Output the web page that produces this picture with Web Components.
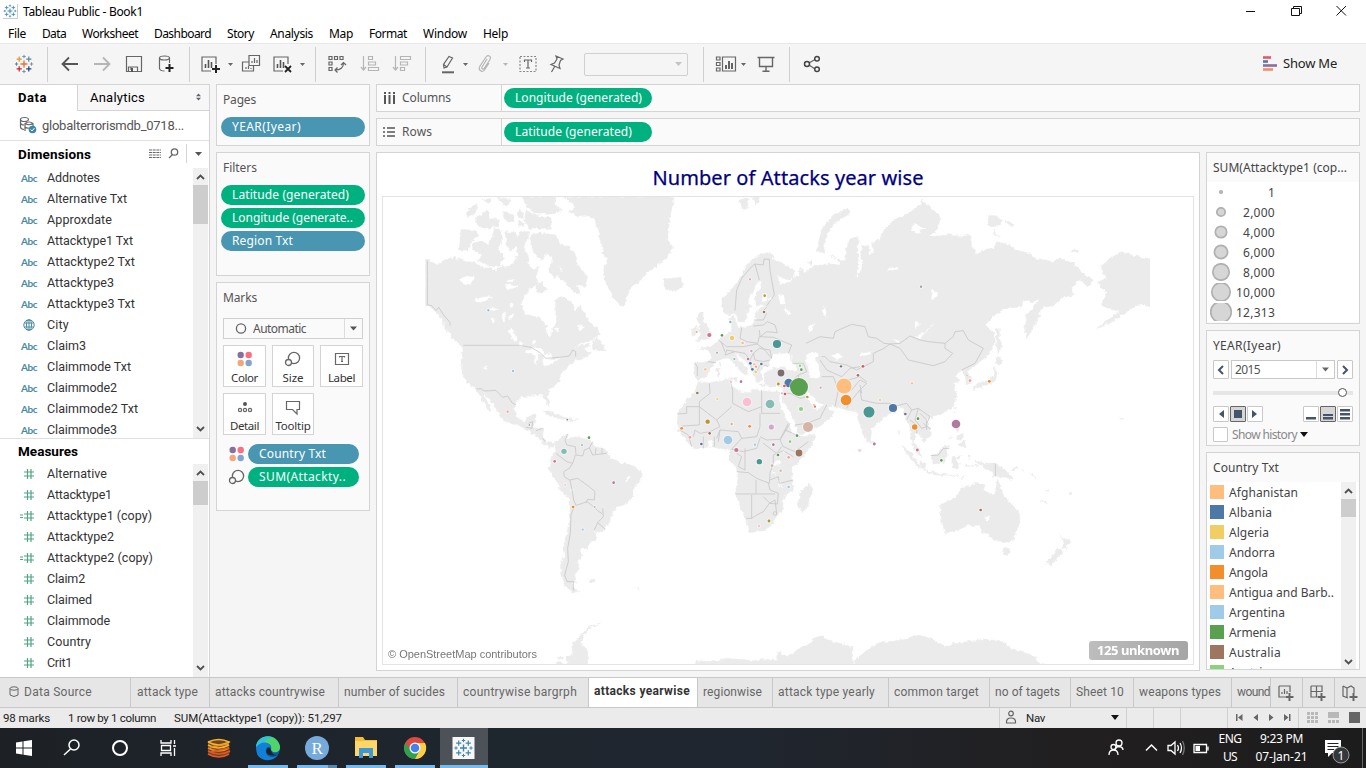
<!DOCTYPE html>
<html lang="en"><head><meta charset="utf-8"><title>Tableau Public - Book1</title>
<style>html,body{margin:0;width:1366px;height:768px;overflow:hidden;background:#f5f5f5}</style></head>
<body><tableau-app></tableau-app>
<script>
const BASE='*{box-sizing:border-box}svg{display:block;overflow:visible;flex:none}';
function define(name,css,html){
  customElements.define(name,class extends HTMLElement{
    connectedCallback(){
      if(this.shadowRoot)return;
      const r=this.attachShadow({mode:'open'});
      r.innerHTML='<style>'+BASE+css+'</style>'+(typeof html==='function'?html(this):html);
    }
  });
}
const T=(t,w)=>`<fit-text w="${w}">${t}</fit-text>`;
const plus=(x,y,r,c,w=1)=>`<path d="M${x-r} ${y}H${x+r}M${x} ${y-r}V${y+r}" stroke="${c}" stroke-width="${w}"/>`;
const logo=(cols)=>plus(10,10,3.5,cols[0],1.4)+plus(5.2,5.2,2.6,cols[1],1.2)+plus(14.8,5.2,2.6,cols[2],1.2)+plus(5.2,14.8,2.6,cols[3],1.2)+plus(14.8,14.8,2.6,cols[4],1.2)+plus(10,2.5,1.7,cols[5])+plus(10,17.5,1.7,cols[6])+plus(2.5,10,1.7,cols[7])+plus(17.5,10,1.7,cols[8]);
const blue=Array(9).fill('#3f86ad');
const D='fill="none" stroke="#666" stroke-width="1.2"', L='fill="none" stroke="#b5b5b5" stroke-width="1.2"';
const size='<circle cx="11" cy="9" r="5.6"/><circle cx="5.5" cy="13.5" r="3" fill="#fafafa"/>';
const dots='<g stroke="none"><circle cx="5.7" cy="6" r="3.2" fill="#86719d"/><circle cx="13.7" cy="6" r="3.2" fill="#fb6e82"/><circle cx="5.7" cy="14" r="3.2" fill="#f3a678"/><circle cx="13.7" cy="14" r="3.2" fill="#83a4cd"/></g>';
const I={
 logo:logo(['#e8762c','#e8912d','#5b879b','#c72037','#1f457d','#5b9bc0','#7199a6','#59879b','#7199a6']),
 blogo:logo(blue),
 back:`<path d="M18 10H3M9 3.500L2.500 10L9 16.500" fill="none" stroke="#555" stroke-width="1.800"/>`,
 fwd:`<path d="M2 10H17M11 3.500L17.500 10L11 16.500" fill="none" stroke="#b5b5b5" stroke-width="1.800"/>`,
 save:`<path d="M2.500 2.500H17.500V17.500H2.500ZM4.500 17V13H13.500V17M7 13V16" ${D}/><path d="M7 14h2v4H7z" fill="#555"/>`,
 db:`<path d="M13.500 9V4M3.500 4V14.500Q4 17 8.500 17" ${D}/><ellipse cx="8.500" cy="4" rx="5" ry="2" ${D}/><path d="M13.500 10V18M9.500 14H17.500" stroke="#222" stroke-width="2"/>`,
 sheet:`<path d="M11 17H2V3H16V10" ${D}/><path d="M5.500 14V10M8.500 14V6M11.500 14V8" stroke="#555" stroke-width="1.600"/><path d="M16 11V19M12 15H20" stroke="#222" stroke-width="2"/>`,
 dup:`<path d="M8 1.500H18.500V11.500H8ZM8 8H1.500V17H12.500V12M11 9V7M13.500 9V4M16 9V6M5 15V13M7.500 15V12M10 15V14" ${D}/>`,
 clear:`<path d="M11 17H2V3H16V10" ${D}/><path d="M5.500 14V10M8.500 14V6M11.500 14V8" stroke="#555" stroke-width="1.600"/><path d="M13 12L19 18M19 12L13 18" stroke="#222" stroke-width="1.800"/>`,
 swap:`<path d="M2 2.500h3v3H2zM7.500 2.500h3v3H7.500zM13 2.500h3v3H13zM2 8h3v3H2zM2 13.500h3v3H2zM8 16Q16.500 16 16.500 9M14 11L16.500 8.500L19 11M10.500 13.500L8 16L10.500 18.500" ${D}/>`,
 asc:`<path d="M3.500 2V16M1 13L3.500 16L6 13M8.500 2.500H12.500V5.500H8.500ZM8.500 8H15.500V11H8.500ZM8.500 13.500H18.500V16.500H8.500Z" ${L}/>`,
 desc:`<path d="M3.500 2V16M1 13L3.500 16L6 13M8.500 2.500H18.500V5.500H8.500ZM8.500 8H15.500V11H8.500ZM8.500 13.500H12.500V16.500H8.500Z" ${L}/>`,
 pen:`<path d="M6 14L5.500 10.500L11 2.500L14.500 4L9 13ZM5.500 10.500L9 13" ${D}/><path d="M4 18.300H16" stroke="#666" stroke-width="2"/>`,
 clip:`<path d="M12 5L7 13C6 15 8.500 16 9.500 14L15 5.500C17 2 12.500 .5 11 3L5 12C2.500 16.500 7.500 19 9.500 16L14 9" ${L}/>`,
 text:`<path d="M2 2.500H18V17.500H2Z" fill="none" stroke="#888" stroke-width="1.200" stroke-dasharray="2 1.500"/><path d="M6.500 8V6H13.500V8M10 6V14M8 14H12" ${D}/>`,
 pin:`<path d="M9 2L16 5L13.500 6.500L12 11L13 14.500L4 10.500L7.500 9L10 5Z M8 12L4.500 18" ${D}/>`,
 fit:`<path d="M.5 3h3.500v3H.5zM.5 8.500h3.500v3H.5zM.5 14h3.500v3H.5zM6.500 3H19.500V17H6.500Z" ${D}/><path d="M10 15V11M13 15V7M16 15V9" stroke="#555" stroke-width="1.800"/>`,
 pres:`<path d="M1.500 3.500H18.500M3.500 3.500V12.500H16.500V3.500M10 12.500V17M6.500 17.300H13.500" fill="none" stroke="#666" stroke-width="1.400"/>`,
 share:`<path d="M7 9L13 5.500M7 11L13 15" ${D}/><g fill="none" stroke="#444" stroke-width="1.500"><circle cx="5" cy="10" r="2.500"/><circle cx="15" cy="4.700" r="2.300"/><circle cx="15" cy="15.300" r="2.300"/></g>`,
 showme:`<path d="M3 3.500H11" stroke="#e9546b" stroke-width="2.600"/><path d="M3 7.500H8" stroke="#4e79a7" stroke-width="2.600"/><path d="M3 11.500H17" stroke="#8e6c9b" stroke-width="2.600"/><path d="M3 15.500H13" stroke="#f28e6b" stroke-width="2.600"/>`,
 car:`<path d="M7.500 9H12.500L10 12Z" fill="#666"/>`, carl:`<path d="M7.500 9H12.500L10 12Z" fill="#b8b8b8"/>`,
 size:`<g fill="none" stroke="#666" stroke-width="1.300">${size}</g>`, dots,
 label:`<path d="M3.500 4.500H16.500V15.500H3.500Z M7.500 8.500V7.500H12.500V8.500M10 7.500V12.500M9 12.500H11" ${D}/>`,
 detail:`<circle cx="10" cy="7" r="2" fill="#555"/><g ${D}><circle cx="5" cy="13" r="1.600"/><circle cx="10" cy="13" r="1.600"/><circle cx="15" cy="13" r="1.600"/></g>`,
 tip:`<path d="M3.500 4.500H16.500V12.500H14V17L9.500 12.500H3.500Z" ${D}/>`,
 globe:`<g fill="none" stroke="#4a8aa3" stroke-width="1"><circle cx="10" cy="10" r="5.200"/><ellipse cx="10" cy="10" rx="2.500" ry="5.200"/><path d="M5.500 8H14.500M5.500 12H14.500M10 5V15"/></g>`,
 hash:`<path d="M8.500 5V15M12 5V15M5 8H15M5 12H15" stroke="#4fa484" stroke-width="1.200"/>`,
 ehash:`<path d="M8.500 5V15M12 5V15M5 8H15M5 12H15M1 9H4M1 11.500H4" stroke="#4fa484" stroke-width="1.200"/>`,
 src:`<g ${D}><ellipse cx="6.500" cy="4.500" rx="4" ry="2"/><path d="M2.500 4.500V12Q2.500 14 6 14.500M2.500 8Q3 10 6 10"/><path d="M7 16V8.500Q11 5.500 15 8.500V11M7 8.500Q11 11 15 8.500M7 12Q9 13.500 11 13"/></g><circle cx="14.500" cy="14.500" r="3.800" fill="#3e87a8"/><path d="M12.600 14.500L14 16L16.500 13" fill="none" stroke="#fff"/>`
};
const svg=(n,w=20)=>`<svg width="${w}" height="${w}" viewBox="0 0 20 20">${I[n]}</svg>`;

/* Text run tracked to a fixed measure. */
customElements.define('fit-text',class extends HTMLElement{
  connectedCallback(){
    if(this.shadowRoot)return;
    const r=this.attachShadow({mode:'open'}),w=+this.getAttribute('w');
    r.innerHTML=`<style>:host{display:inline-block;width:${w}px;white-space:pre;flex:none;vertical-align:top}span{display:inline-block}</style><span><slot></slot></span>`;
    const s=r.querySelector('span');
    s.style.letterSpacing=((w-s.getBoundingClientRect().width)/this.textContent.length)+'px';
  }
});
define('title-bar',`:host{display:flex;height:22px;background:#fff;align-items:center;font:12px "Noto Sans",sans-serif;color:#000;padding-left:3px}
.i{width:15px;height:15px;border:1px solid #ccc;border-width:0 1px 1px 0;margin-right:5px}.w{margin-left:auto;padding-right:16px}`,
`<div class="i">${svg('blogo',14)}</div>${T('Tableau Public - Book1',120)}<svg class="w" width="124" height="22" fill="none" stroke="#111"><path d="M4 11.500H13M49.500 8.500H57.500V15.500H49.500ZM51.500 8V6.500H59.500V13.500H58M94.500 6L104 15.500M104 6L94.500 15.500"/></svg>`);
define('menu-bar',`:host{display:flex;height:21px;background:#fff;align-items:center;font:12px "Noto Sans",sans-serif;color:#000;padding:1px 0 0 8px;gap:16px}`,
 [['File',18],['Data',24],['Worksheet',56],['Dashboard',57],['Story',27],['Analysis',43],['Map',24],['Format',38],['Window',44],['Help',25]].map(a=>T(...a)).join(''));
const tools=[['logo',23.5],['|',47],['back',70],['fwd',102],['save',134],['db',166],['|',189],['sheet',210],['car',230],['dup',251],['clear',282],['car',302.5],['|',315],['swap',337],['asc',370],['desc',402],['|',425],['pen',448],['car',465.5],['clip',485],['carl',505.5],['text',527.5],['pin',557],['box',635.5],['|',703],['fit',726],['car',743.5],['pres',765.500],['|',789],['share',812],['showme',1270]];
define('tool-bar',`:host{display:flex;height:41px;background:#f5f5f5;border-top:1px solid #e8e8e8;align-items:center;font:13px "Noto Sans",sans-serif;color:#222}
i{width:1px;height:35px;background:#cfcfcf}.b{width:104px;height:23px;border:1px solid #d0d0d0;border-radius:2px;display:flex;justify-content:flex-end;align-items:center}`,
()=>{let x=0,o='';for(const[n,c]of tools){const w=n=='|'?1:n=='box'?104:n.startsWith('car')?7:20,l=c-w/2,m=`style="margin-left:${l-x}px"`;x=l+w;
 o+=n=='|'?`<i ${m}></i>`:n=='box'?`<div class="b" ${m}><svg width="16" height="20"><path d="M4 8H11L7.500 12Z" fill="#c4c4c4"/></svg></div>`:w==7?`<svg ${m} width="7" height="20" viewBox="6.500 0 7 20">${I[n]}</svg>`:`<svg ${m} width="20" height="20">${I[n]}</svg>`}
 return o+'<span style="margin-left:3px;margin-top:-2px">'+T('Show Me',54)+'</span>'});

define('scroll-bar',`:host{display:flex;flex-direction:column;width:15px;background:#f0f0f0;align-items:center;justify-content:space-between;padding:6px 0;position:relative}
i{position:absolute;top:17px;left:0;width:15px;background:#cdcdcd}`,
 e=>`<svg width="9" height="6"><path d="M1 5L4.500 1.500L8 5" fill="none" stroke="#505050" stroke-width="1.800"/></svg><i style="height:${e.getAttribute('thumb')}px"></i><svg width="9" height="6"><path d="M1 1L4.500 4.500L8 1" fill="none" stroke="#505050" stroke-width="1.800"/></svg>`);
define('field-row',`:host{display:flex;height:21px;flex:none;align-items:center;font:12.500px Roboto,sans-serif;color:#333}
b{width:28px;margin-left:19px;display:flex;flex:none;font:700 10px Lato,sans-serif;color:#4a8aa3}b span{padding:1px 0 0 2px}`,
 e=>{const k=e.getAttribute('kind');return `<b>${k=='abc'?'<span>'+T('Abc',16)+'</span>':svg(k)}</b><fit-text w="${e.getAttribute('w')}">${e.getAttribute('label')}</fit-text>`});
const rows=a=>a.map(([k,t,w])=>`<field-row kind="${k}" label="${t}" w="${w}"></field-row>`).join('');
define('data-pane',`:host{display:flex;flex-direction:column;width:210px;flex:none;height:593px;background:#fff;border-right:1px solid #d4d4d4;overflow:hidden;color:#000;font:13px Roboto,sans-serif}
.tabs{display:flex;height:27px;border-top:1px solid #d4d4d4;flex:none;line-height:25px}.tabs b{width:77px;padding-left:18px}
.an{flex:1;background:#f7f7f7;border-left:1px solid #d4d4d4;border-bottom:1px solid #d4d4d4;padding:0 7px 0 12px;display:flex;justify-content:space-between;align-items:center;font-size:13px}
.src{display:flex;height:30px;flex:none;align-items:center;border-bottom:1px solid #e0e0e0;padding:0 0 1px 18px;gap:4px;color:#555;font-size:13px}
.h{display:flex;flex:none;padding:0 0 2px 18px;align-items:center;font-weight:700;font-size:13.500px}
.l{display:flex;overflow:hidden;justify-content:space-between;padding-right:1px}`,
`<div class="tabs"><b>${T('Data',29)}</b><div class="an">${T('Analytics',55)}<svg width="7" height="8" style="margin-top:-2px"><path d="M1 3.300L3.500 .5L6 3.300ZM1 4.700L3.500 7.500L6 4.700Z" fill="#5c6370"/></svg></div></div>
<div class="src">${svg('src')}${T('globalterrorismdb_0718...',142)}</div>
<div class="h" style="height:27px">${T('Dimensions',73)}<svg style="margin-left:58px" width="60" height="20"><path d="M0 6H12M0 8.500H12M0 11H12M0 13.500H12" stroke="#666" stroke-dasharray="3 .7"/><g fill="none" stroke="#666" stroke-width="1.300"><circle cx="25.500" cy="8" r="3.200"/><path d="M23.500 10.500L20 14"/></g><path d="M37.500 0V19" stroke="#d4d4d4"/><path d="M46 8H53L49.500 12Z" fill="#555"/></svg></div>
<div class="l" style="height:271px;flex:none;border-bottom:1px solid #e0e0e0"><div style="margin-top:-1px">${rows([['abc','Addnotes',53],['abc','Alternative Txt',80],['abc','Approxdate',65],['abc','Attacktype1 Txt',86],['abc','Attacktype2 Txt',88],['abc','Attacktype3',67],['abc','Attacktype3 Txt',88],['globe','City',22],['abc','Claim3',39],['abc','Claimmode Txt',84],['abc','Claimmode2',70],['abc','Claimmode2 Txt',91],['abc','Claimmode3',70]])}</div><scroll-bar thumb="39"></scroll-bar></div>
<div class="h" style="height:25px">${T('Measures',60)}</div>
<div class="l" style="flex:1"><div style="margin-top:-1px">${rows([['hash','Alternative',60],['hash','Attacktype1',65],['ehash','Attacktype1 (copy)',105],['hash','Attacktype2',67],['ehash','Attacktype2 (copy)',106],['hash','Claim2',38],['hash','Claimed',45],['hash','Claimmode',63],['hash','Country',44],['hash','Crit1',25]])}</div><scroll-bar thumb="24"></scroll-bar></div>`);

define('ui-card',`:host{display:block;background:#fafafa;border:1px solid #d4d4d4;font:12px "Noto Sans",sans-serif;color:#555;overflow:hidden;flex:none}`,'<slot></slot>');
define('field-pill',`:host{display:flex;height:20px;border-radius:10px;align-items:center;padding:0 0 1px 11px;color:#fff;background:#00b180;font:12px/18px "Noto Sans",sans-serif}:host([dim]){background:#4996b2}`,e=>`<fit-text w="${e.getAttribute('w')}">${e.getAttribute('label')}</fit-text>`);
const pill=(t,w,dim,st='')=>`<field-pill label="${t}" w="${w}" ${dim?'dim':''} style="${st}"></field-pill>`;
define('mark-button',`:host{display:flex;flex-direction:column;align-items:center;justify-content:space-between;height:42px;background:#fff;border:1px solid #d4d4d4;padding:3px 0 1px;font:11.500px/15px "Noto Sans",sans-serif;color:#333}`,e=>svg(e.getAttribute('icon'))+`<fit-text w="${e.getAttribute('w')}">${e.getAttribute('label')}</fit-text>`);
define('card-column',`:host{display:flex;flex-direction:column;gap:6px;width:154px;margin-left:6px;flex:none}
.t{padding:6px 0 0 6px;height:30px;color:#555}.p{display:flex;flex-direction:column;gap:3px;padding:0 4px}
.sel{margin:5px 6px 0;height:21px;border:1px solid #d0d0d0;background:#fafafa;display:flex;align-items:center;width:140px}
.g{display:grid;grid-template-columns:43px 42px 43px;gap:6px;margin:6px 6px 0}.g mark-button{height:42px}
.r{display:flex;padding-left:10px;margin-bottom:3px;gap:1px;align-items:center}.r field-pill{width:111px}`,
`<ui-card style="height:62px"><div class="t" style="height:32px">${T('Pages',33)}</div><div class="p">${pill('YEAR(Iyear)',69,1)}</div></ui-card>
<ui-card style="height:124px"><div class="t" style="height:32px">${T('Filters',34)}</div><div class="p">${pill('Latitude (generated)',117)+pill('Longitude (generate..',121)+pill('Region Txt',61,1)}</div></ui-card>
<ui-card style="height:229px"><div class="t">${T('Marks',34)}</div><div class="sel"><svg width="29" height="19"><circle cx="17" cy="9.500" r="4.600" fill="none" stroke="#666" stroke-width="1.300"/></svg>${T('Automatic',53)}<svg style="margin-left:auto" width="18" height="19"><path d="M.5 0V19" stroke="#ddd"/><path d="M6 7.500H13L9.500 11.500Z" fill="#555"/></svg></div>
<div class="g">${[['dots','Color',27],['size','Size',21],['label','Label',27],['detail','Detail',29],['tip','Tooltip',35]].map(a=>`<mark-button icon="${a[0]}" label="${a[1]}" w="${a[2]}"></mark-button>`).join('')}</div>
<div style="height:9px"></div><div class="r">${svg('dots')}${pill('Country Txt',67,1)}</div><div class="r">${svg('size')}${pill('SUM(Attackty..',87)}</div></ui-card>`);
define('shelf-row',`:host{display:flex;height:28px;border:1px solid #d4d4d4;background:#fafafa;align-items:center;font:12px "Noto Sans",sans-serif;color:#555}
.n{width:125px;height:100%;border-right:1px solid #d4d4d4;display:flex;align-items:center;gap:6px;padding:0 0 1px 6px;margin-right:2px}field-pill{width:148px}`,
e=>{const c=e.hasAttribute('cols');return `<div class="n"><svg width="13" height="12"><path d="${c?'M2 0V2M6.500 0V2M11 0V2M2 3V12M6.500 3V12M11 3V12':'M0 2H2M0 6H2M0 10H2M4 2H12M4 6H12M4 10H12'}" stroke="#555" stroke-width="${c?2:1.6}"/></svg>${c?T('Columns',49):T('Rows',30)}</div>${c?pill('Longitude (generated)',127):pill('Latitude (generated)',117)}`});

/* Map: each group is drawn on a sheet three times finer than the page. */
const G=(x,y,s,a='')=>`<g transform="translate(${x} ${y}) scale(.33333)" ${a}>${s}</g>`;
const P=d=>`<path d="${d}"/>`;
const land=G(376,190,P('M148 207L160 212L185 225L205 210L225 208L237 198L240 212L255 205L270 215L300 218L325 235L345 232L355 240L380 228L400 232L415 215L425 190L420 150L432 125L458 125L460 135L445 160L450 190L460 200L455 225L475 240L490 225L480 255L485 280L460 300L440 325L435 350L450 372L490 385L510 405L515 435L525 440L530 415L540 400L543 385L538 355L540 330L545 318L565 325L590 340L600 365L612 348L625 370L640 395L665 415L670 435L650 450L610 462L590 478L612 466L640 460L645 465L625 475L630 485L650 490L610 510L600 505L590 520L570 535L555 550L548 575L530 590L515 605L515 620L522 640L518 648L508 628L500 615L480 615L440 620L420 635L415 655L425 685L445 695L460 675L480 675L475 700L470 713L503 715L500 735L510 755L535 762L530 772L505 765L485 740L460 725L440 712L400 700L375 685L360 655L335 620L320 605L345 660L340 664L320 630L300 598L275 580L258 550L255 510L262 475L235 450L220 430L205 400L190 380L180 365L160 348L148 348Z')+
P('M565 20L895 20L880 90L875 150L890 170L870 205L850 220L835 235L810 250L790 275L765 290L750 325L745 350L720 335L700 300L685 265L683 235L695 210L680 190L685 180L672 150L668 120L655 85L630 75L600 78L580 65L600 50Z')+
P('M255 118L300 122L310 135L290 150L275 180L250 180ZM290 160L320 150L335 165L350 140L355 115L375 120L380 150L365 175L385 205L370 228L330 225L305 210L318 195L290 180ZM390 125L420 128L425 165L405 180L390 165ZM465 135L490 128L500 160L510 190L500 210L475 190L465 165ZM490 130L540 135L550 160L580 170L600 200L605 225L635 260L625 290L600 280L615 310L600 310L560 270L545 262L560 240L530 205L500 180ZM530 205L545 210L555 250L535 265L520 240ZM480 285L495 275L515 300L495 308L480 305ZM450 60L475 75L525 85L525 115L460 115L445 90ZM440 20L540 20L535 45L560 60L530 72L480 72L450 50ZM275 60L305 40L300 65L275 82ZM298 85L335 60L340 85L370 90L365 110L320 115L300 100ZM380 65L415 75L410 95L385 90ZM320 30L345 25L340 40ZM365 25L405 30L390 48ZM425 60L443 70L440 85L425 80ZM430 90L445 100L440 112L425 108ZM650 455L665 442L690 482L650 480ZM200 400L215 405L212 430ZM497 665L520 662L560 680L590 690L540 685ZM580 686L605 690L570 695ZM862 270L870 262V285Z'))+
G(376,420,P('M535 70L555 52L575 40L570 58L600 50L640 60L660 80L690 88L705 115L740 130L770 135L795 155L795 175L775 200L770 230L755 250L725 260L710 280L700 305L680 335L655 335L665 355L640 370L635 385L612 388L620 405L605 425L610 440L595 465L600 485L590 490L595 510L612 515L590 517L565 495L560 470L553 440L565 410L562 380L575 330L582 280L582 235L555 210L535 175L518 150L525 115L540 95ZM640 478H656V486H642ZM780 503L790 512L782 508ZM675 608L640 625L620 650L612 668L635 690L635 735H575L570 712L590 705L588 680L610 650L640 620ZM548 712H560V718H548ZM545 728H560V735H545Z'))+
G(660,190,P('M185 325L215 300L235 270L260 225L285 200L320 188L340 195L335 208L360 215L400 240L403 260L385 270L365 262L350 255L360 285L390 275L410 258L418 262L418 240L425 232L432 250L465 228L500 222L545 225L525 205L512 195L530 205L555 215L560 200L555 180L570 145L590 140L590 170L595 200L600 230L590 265L605 240L605 170L630 170L625 195L640 190L635 160L660 150L665 130L700 90L740 75L780 45L785 30L820 60L840 80L835 115L805 140L870 135L900 140L930 135L935 170L950 190L1000 175L1010 155L1050 165L1065 180L1110 190L1125 205L1180 215L1200 205L1240 220L1280 260L1300 270L1285 290L1260 270L1235 290L1240 315L1215 320L1180 345L1140 355L1140 375L1120 415L1100 445L1092 410L1100 375L1140 325L1120 335L1090 330L1085 350L1040 355L1010 370L975 405L1000 425L1005 450L990 490L960 515L940 530L920 545L935 570L925 585L915 555L905 540L885 560L900 570L880 580L890 615L880 650L850 670L815 680L800 690L812 720L815 735L790 755L775 730L765 735L760 755L780 780L785 800L770 790L755 760L748 700L738 690L728 655L715 650L690 670L665 690L635 715L632 750L625 757L610 735L595 690L590 665L560 660L530 650L500 650L480 640L440 605L430 605L450 640L470 660L495 645L520 665L515 680L495 700L415 735L405 700L385 660L366 630L368 615L370 590L330 590L315 580L312 550L340 535L370 530L400 545L415 540L395 515L395 495L370 490L345 488L330 510L325 528L310 530L300 545L310 570L290 575L275 545L265 520L240 500L225 490L235 510L265 535L258 555L240 540L215 515L205 500L180 510L165 515L145 545L140 560L115 570L103 560L103 515L145 515L155 500L145 480L125 475L160 465L175 450L200 432L215 425L215 395L208 385L222 375L228 395L235 415L280 405L290 385L285 370L310 350L330 350L290 345L285 325L303 290L300 275L290 278L270 320L265 345L275 350L260 370L255 395L235 395L225 365L210 375L190 370Z')+
P('M115 575L150 578L200 568L215 572L212 590L240 605L270 608L280 598L330 605L357 605L358 632L375 680L388 705L395 728L420 742L465 733L460 755L430 800L395 835L400 900L370 925L368 960L345 985L335 1005L310 1022L270 1028L262 1000L245 960L226 910L235 860L228 830L210 810L210 780L180 775L150 770L110 778L80 755L55 720L52 690L55 665L75 640L80 625L100 615Z')+
P('M450 880L458 900L440 955L425 965L415 945L420 905ZM115 370L130 368L128 385L140 405L155 432L150 445L108 453L122 436L115 420L122 408L112 390ZM95 420L110 405L115 430L96 440ZM10 268L60 262L72 285L45 305L15 298ZM565 55L570 70L530 95L505 125L490 165L495 190L472 185L475 155L490 110L520 75ZM238 30L265 22L262 55L250 62ZM275 22H298L290 48ZM443 218L457 214V226ZM577 150L595 145L592 168ZM168 535H178L176 560H170ZM178 520H184L182 532ZM205 565L235 562L230 575ZM297 582H330V586H300ZM355 580L368 577L360 586ZM632 750L645 760L640 772ZM728 768L755 790L780 830L810 850L808 852L775 830L750 805ZM715 720H718V735ZM985 75L1010 78L1028 92L1020 105L985 108ZM1035 93L1063 103L1055 110ZM1000 120L1018 140L1000 135ZM1232 186L1245 176L1256 184ZM1385 185L1410 195L1472 207V350L1440 342L1400 365L1345 400L1310 415L1380 365L1340 355L1325 340L1340 310L1320 290L1315 275L1340 265L1322 230L1350 205ZM570 456H580V461H570Z')+
P('M105 735L110 722L170 725L200 715L240 718L280 722L320 718L350 722L352 692L365 700L380 712L410 690L450 672L470 650L490 648L505 662L575 678L578 733L590 715L630 685L660 668L740 658L775 645L810 655L830 665L855 680L900 668L970 658L1010 662L1040 672L1050 685L1090 695L1120 708L1135 728L1165 735Z').replace('<path','<path transform="translate(0 690)"'))+
G(920,190,P('M60 945L105 925L125 895L145 890L165 880L195 885L190 900L215 915L225 910L232 870L240 885L250 915L275 945L298 970L300 995L280 1050L250 1058L220 1050L205 1030L190 1030L180 1010L150 1005L110 1020L75 1030L65 990ZM247 1075L270 1077L265 1095L255 1097ZM420 1032L430 1045L452 1052L440 1075L425 1078L432 1060ZM412 1078L428 1085L395 1125L378 1118ZM230 415H238V445L245 465L235 490L228 460ZM232 500L252 515L238 525L226 520ZM222 530L232 545L225 578L200 583L170 592L158 590L180 578L205 575L220 555ZM155 594L168 594L162 606ZM176 587H188V595ZM130 540L145 550L155 570L138 585L138 565L128 550ZM105 650L110 652L102 668ZM30 680L44 677L38 690ZM105 690L118 710L112 725L105 718ZM118 735L130 730V742L115 752L110 738ZM120 758L135 750L135 770L115 765ZM75 765L90 768L78 775L82 795L72 820L40 822L32 800L55 790ZM97 800L130 797L120 803L105 808L118 820L110 837L98 832L95 818ZM145 795L152 800L148 808ZM165 810L190 820L225 820L250 835L265 850L278 868L245 860L220 858L218 845L190 832ZM275 838L295 828L290 838L270 842ZM12 842L50 848L85 855L50 856ZM85 856L115 856L105 860ZM120 865L137 855L125 866ZM135 826H175V829H135ZM86 750L98 738ZM305 838L315 846ZM365 930L382 942H376ZM378 897L385 905ZM445 913L455 906V914ZM330 850L350 868L345 862ZM535 410L560 400L540 412ZM600 682H610V688H605Z')+P('M0 810L15 820L12 835L0 830Z'));
const lakes=G(376,190,P('M250 268L270 258L295 262L285 280L265 285L255 275ZM298 325L350 318L320 338L300 335ZM345 355L370 358L345 360ZM395 270H412V275H395ZM388 282L425 290L392 300ZM402 340H410L405 355ZM380 370L390 366L385 392H378ZM400 375H415L402 390ZM395 418H410L425 452L415 455ZM450 482L480 472L500 482L515 500L500 495L485 490L480 528L474 515L478 495L455 490ZM505 495L525 490L528 505L518 512L552 505L530 520L508 528L500 515ZM323 530L332 528V537H325ZM603 405L625 412L610 422ZM538 414H548V422H538ZM430 458H440V466H430ZM470 455H477V462H470ZM345 385H355V395H348Z'))+
G(376,420,P('M745 180L760 168L763 176L748 187ZM582 206L590 210V218Z'))+
G(660,190,P('M440 495L460 485L475 492L465 510L475 525L480 560L462 567L445 552L448 530L436 512ZM512 498L535 490L545 498L535 508L518 505ZM355 315L370 313L375 340L362 345ZM375 350L390 368L382 375ZM445 410L465 400L455 415L450 428ZM487 360L495 350L500 378L490 375ZM765 100L775 110L795 115L780 120L785 130L760 125L755 112ZM680 242L700 230L714 238ZM765 390L778 400L765 415ZM820 400L780 445L765 440L800 425ZM598 492L635 485L630 492L605 498ZM308 312L318 310L320 332L310 335ZM327 328L338 322L333 335ZM345 812H360V823H343ZM335 842L345 855L335 848ZM358 870L366 895L360 890ZM815 303L833 308L832 318L815 327ZM368 777L375 790H370ZM148 750L158 755L155 770L145 767ZM198 982H206V992H198ZM590 260L598 225L595 200L604 195V240ZM703 448L720 456L708 458Z'))+G(920,190,P('M195 982L207 978V990H198Z'));
const borders=G(376,190,P('M154 212V345L167 347L180 362L188 352L205 378L222 397V407M262 466H430L465 472L492 488L510 505L550 502L580 498L590 480L599 485V500M302 597L315 596L325 603L360 601L380 622L395 618L410 640L420 644M457 700L470 695L468 715L450 712M480 722L500 715M500 745L508 755M572 683V694'))+
G(376,420,P('M575 42L567 60L572 75L598 80L600 105L620 108L625 90L640 84L650 65M640 84L650 105L692 100M660 85L658 102M678 84V102M598 105L590 130L572 125L540 100M590 130L580 145L563 155L565 170L580 180L605 175M582 180L590 220L593 240L600 256L620 250L633 245L655 262L665 272L680 282M605 175L640 200L657 215L655 240L635 238L630 248M680 265L682 290L665 308L655 330M665 308L688 328M596 256L585 285L583 340L575 385L577 425L566 465L573 485H592V512'))+
G(660,190,P('M225 362L230 300L245 265L270 235L285 222L310 225L312 207L328 208L330 240L343 315L320 348M285 222L298 270M310 362L320 352M282 390L310 390L320 370M280 408L310 405L322 395L345 405L352 428L320 425L300 440L298 420M245 413L240 445L260 455L293 460L298 440L340 442L395 465L385 490M183 455L195 485M175 450L200 470L250 470L290 462L310 475L335 505L330 480L298 475L280 490L270 510L255 490L200 480L195 495L225 485M280 490L285 510L310 515L330 510M270 510L275 540L290 545L300 525M312 525L325 530M105 520L112 530V558M143 515L168 518M438 460L480 440L520 445L525 425L575 403L615 410L625 440L650 445L672 460L690 462L672 475L640 490L640 515L590 540L560 525L510 515L495 500H485M480 510L500 540L545 560L570 535L600 530M690 462L720 475L745 510L820 527L855 515L878 490L855 475L855 460L805 455L780 450L750 438L720 460ZM855 460L880 440L885 425L910 422L925 450L970 475L945 520L905 540M400 520L430 520L440 545L415 555L390 580L370 590M415 555L420 595L440 607M370 610L390 610L420 625L440 620M405 705L440 700L480 685L490 665L500 645M485 560L520 560L535 600L525 650M535 600L575 600L600 570L620 580L600 600L575 630L560 655M600 600L605 630L650 640L690 640L700 650L740 640L755 660L740 690M605 610L600 585M700 645L705 670M755 660L775 655L810 680L800 700M775 655L765 690L785 715L800 710M750 690L770 705V730M565 570L600 560L620 575'))+
G(660,190,P('M210 570L218 600V640L265 665L305 650M305 600V670H360M148 580L150 610L118 635V650H80V670L52 672M118 650L170 690L215 650M118 650V705L65 708M170 690L180 710L150 725L120 730L105 720L100 740M300 670L300 710L290 740L245 745L235 725L180 720L170 745M300 740L320 750L360 748L375 720L385 700M375 720L410 735L420 740M180 720L175 755M245 745L215 778L250 785L290 775L300 745M230 790L245 800L235 830L255 840L255 775M230 845L265 848L290 865L328 880L330 850L340 820L340 795L370 782L400 800M365 770L350 790L310 760M390 700L360 750L370 770L405 785L445 755M226 912H345M288 870V910M275 915V985L290 975L310 965L328 940L345 930M330 870L355 860L358 880L400 870M258 985L275 985M345 930L350 970M345 965A5 5 0 1 0 345 976A5 5 0 1 0 345 965M310 920L330 940L352 942L355 910L330 900L325 880M60 720L85 735L95 770M130 740L130 775M163 740V770M790 700L812 718'))+
G(920,190,P('M32 797L55 795L70 775L88 776M226 820V858M137 555L145 558M0 670L20 690V720'));
/* x, y, radius, colour for every mark */
const M=(ox,oy,a)=>a.map(([x,y,r,c])=>{const X=ox+x/3,Y=oy+y/3;return `<circle cx="${X}" cy="${Y}" r="${r+1}" fill="#fff" opacity=".45"/><circle cx="${X}" cy="${Y}" r="${r}" fill="${c}"/>`}).join('');
const marks=M(376,190,[[337,361,1.1,'#85b9df'],[411,543,1.1,'#85b9df'],[395,665,1.1,'#f59b99'],[574,689,.8,'#888'],[460,705,.8,'#888']])+
M(376,420,[[564,94,2.7,'#86bcb6'],[639,53,1.3,'#59a14f'],[618,75,1,'#86bcb6'],[536,124,1.3,'#d37295'],[713,188,1.3,'#b07aa1'],[568,194,1,'#fabfd2'],[591,261,1.3,'#f28e2b'],[656,261,1,'#bbb'],[620,329,1.1,'#a0cbe8']])+
M(660,190,[[270,268,1.1,'#d4a6c8'],[314,317,1.3,'#b6992d'],[312,366,1.3,'#9d7660'],[211,396,1.2,'#86bcb6'],[148,435,2.1,'#d37295'],[110,426,1.1,'#d7b5a6'],[186,436,1.3,'#59a14f'],[216,444,2.2,'#f1ce63'],[248,459,1.3,'#ffbe7d'],[171,488,1,'#aaa'],[274,483,1.2,'#d4a6c8'],[351,462,4.1,'#499894'],[223,507,1.1,'#86bcb6'],[264,507,1.2,'#d37295'],[271,520,1.4,'#4e79a7'],[283,523,1.2,'#ffbe7d'],[304,522,1.3,'#4e79a7'],[288,530,1.2,'#ff9d9a'],[277,538,1.3,'#4e79a7'],[287,546,1.3,'#f1ce63'],[136,538,1.2,'#ffbe7d'],[363,549,3.4,'#79706e'],[213,576,1.1,'#fabfd2'],[243,575,1.3,'#b07aa1'],[355,582,1.4,'#b6992d'],[386,579,4.2,'#4e79a7'],[373,588,1.3,'#e15759'],[417,591,9,'#59a14f'],[420,527,1.2,'#8cd17d'],[424,539,1.3,'#59a14f'],[482,593,1.1,'#d4a6c8'],[552,588,7.6,'#ffbe7d'],[558,630,5.3,'#f28e2b'],[543,529,1.2,'#79706e'],[609,529,1.4,'#e15759'],[594,556,1.3,'#9d7660'],[756,580,1.2,'#ffbe7d'],[783,290,1.2,'#a89e9a'],[112,609,1.3,'#9d7660'],[172,627,1.1,'#f1ce63'],[261,636,4.3,'#fabfd2'],[330,642,4.3,'#86bcb6'],[366,610,1.1,'#ddb7ca'],[375,612,1.3,'#e15759'],[442,621,1.3,'#b6992d'],[462,645,1.3,'#f1ce63'],[465,650,1.1,'#d37295'],[423,657,2.1,'#8cd17d'],[627,666,5.5,'#499894'],[699,654,4.1,'#4e79a7'],[660,630,1.1,'#ffbe7d'],[736,672,1.3,'#79706e'],[774,686,1.3,'#59a14f'],[143,695,2.2,'#b6992d'],[444,711,5,'#d7b5a6'],[334,711,2.6,'#d4a6c8'],[269,709,1.4,'#f28e2b'],[215,702,1.2,'#d7b5a6'],[65,715,1.4,'#f28e2b'],[764,711,2.7,'#f28e2b']])+
M(660,420,[[204,60,4.3,'#a0cbe8'],[90,52,1.3,'#ff9d9a'],[124,72,1.3,'#4e79a7'],[149,40,1.3,'#9d7660'],[229,90,2.1,'#d37295'],[285,74,1.2,'#a0cbe8'],[340,74,1.3,'#b07aa1'],[298,125,2.7,'#499894'],[354,105,1.3,'#59a14f'],[411,47,1.3,'#59a14f'],[390,65,1.3,'#8cd17d'],[417,99,3.4,'#9d7660'],[386,112,1.3,'#ff9d9a'],[336,137,1.3,'#d7b5a6'],[362,152,1.2,'#d7b5a6'],[386,201,1.2,'#a0cbe8'],[327,303,1.4,'#b6992d'],[297,318,1.2,'#fabfd2'],[599,91,1.7,'#f3d3dd'],[643,72,1.4,'#b07aa1'],[772,90,1.4,'#d37295']])+
M(920,190,[[108,702,4.3,'#b07aa1'],[150,572,1.3,'#ff9d9a'],[208,574,1.4,'#f28e2b'],[64,811,1.3,'#59a14f'],[182,960,1.3,'#9d7660']]);
define('world-map',`:host{display:block;position:relative;width:812px;height:469px;border:1px solid #e3e3e3;background:#fff;overflow:hidden}svg{overflow:hidden}
.c{position:absolute;left:5px;bottom:3px;font:11px/14px "Liberation Sans",sans-serif;color:#777}
.u{position:absolute;right:5px;bottom:4px;width:99px;height:19px;border-radius:3px;background:linear-gradient(90deg,#bdbdbd,#a5a5a5);color:#fff;font:700 13px/18px "Noto Sans",sans-serif;padding-left:8px}`,
`<svg width="810" height="467" viewBox="383 197 810 467"><filter id="r" x="0" y="0" width="100%" height="100%" filterUnits="objectBoundingBox" color-interpolation-filters="sRGB"><feTurbulence type="fractalNoise" baseFrequency=".25" numOctaves="2" seed="4" result="n"/><feDisplacementMap in="SourceGraphic" in2="n" scale="4.500" xChannelSelector="R" yChannelSelector="G"/></filter>
<g filter="url(#r)"><g fill="#ebebeb" stroke="#ebebeb" stroke-width="1.500">${land}</g><g fill="#fff" stroke="#fff">${lakes}</g></g><path d="M383 250H425.500V310H383ZM1150 250H1190V312H1150Z" fill="#fff"/><path d="M425.500 259H428V306H425.500ZM1147 259H1150V306H1147Z" fill="#ebebeb"/>
<g fill="none" stroke="#c2c2c2" stroke-width="2.200" stroke-linejoin="round">${borders}</g>${marks}</svg>
<div class="c">${T('© OpenStreetMap contributors',149)}</div><div class="u">${T('125 unknown',82)}</div>`);
define('viz-card',`:host{display:block;width:824px;height:519px;background:#fff;border:1px solid #d4d4d4;padding:0 5px;flex:none}h1{margin:0;height:43px;font:20px/50px "Noto Sans",sans-serif;color:#000080;text-align:center;-webkit-text-stroke:.25px #000080}`,`<h1>${T('Number of Attacks year wise',271)}</h1><world-map></world-map>`);
const btn='display:flex;align-items:center;justify-content:center;border:1px solid #c8c8c8;background:#fff;border-radius:1px;';
define('legend-column',`:host{display:flex;flex-direction:column;gap:6px;width:154px;margin-left:6px}
.t{height:29px;padding:6px 0 0 6px;color:#444}.w{background:#fff}
.s{display:flex;height:20px;align-items:center;padding-left:3px}.s div{width:43px;text-align:right;color:#444}.row{display:flex;padding:0 6px;align-items:center}
.q{${btn}width:16px;height:19px}.d{border:1px solid #c8c8c8;background:#fff;height:19px;width:104px;margin:0 2px;display:flex;align-items:center;padding-left:3px;line-height:17px}
.z{${btn}width:16px;height:16px;margin-right:1px}.on{background:#d6d6d6;border-color:#666}
.tr{height:4px;background:#e6e6e6;margin:12px 6px 0;position:relative}.tr i{position:absolute;right:6px;top:-3px;width:9px;height:9px;border:1px solid #555;border-radius:5px;background:#fff}
.c{display:flex;height:20px;align-items:center;padding-left:3px;gap:5px;color:#444}.c i{width:14px;height:14px}`,
`<ui-card style="height:172px"><div class="t">${T('SUM(Attacktype1 (cop...',134)}</div><div class="w">${[['1',7,1.2],['2,000',32,4.200],['4,000',32,5.700],['6,000',32,6.600],['8,000',32,8.200],['10,000',39,9.200],['12,313',39,10.300]].map(([t,w,r])=>`<div class="s"><svg width="22" height="18" style="overflow:hidden"><circle cx="11" cy="9" r="${r}" fill="#d6d6d6" stroke="#b0b0b0" stroke-width="1.700"/></svg><div>${T(t,w)}</div></div>`).join('')}</div></ui-card>
<ui-card style="height:116px"><div class="t">${T('YEAR(Iyear)',68)}</div>
<div class="row"><div class="q"><svg width="8" height="10"><path d="M6 1L2 5L6 9" fill="none" stroke="#44546a" stroke-width="2"/></svg></div><div class="d">${T('2015',25)}<svg style="margin-left:auto" width="18" height="17"><path d="M.5 0V17" stroke="#ddd"/><path d="M6 6.500H13L9.500 10.500Z" fill="#666"/></svg></div><div class="q"><svg width="8" height="10"><path d="M2 1L6 5L2 9" fill="none" stroke="#44546a" stroke-width="2"/></svg></div></div>
<div class="tr"><i></i></div>
<div class="row" style="margin-top:11px">${['M10 3V11L5 7Z','M3 3H11V11H3Z','M4 3V11L9 7Z','M2 10H12V12.500H2Z','M2 7H12V9H2ZM2 10H12V12.500H2Z','M2 2H12V4.500H2ZM2 6H12V8.500H2ZM2 10H12V12.500H2Z'].map((d,i)=>`<div class="z ${i==1||i==4?'on':''}" style="${i==3?'margin-left:auto':i==5?'margin-right:0':''}"><svg width="14" height="14"><path d="${d}" fill="#44546a"/></svg></div>`).join('')}</div>
<div class="row" style="margin-top:4px;color:#888"><div style="${btn}width:15px;height:15px;margin-right:4px"></div>${T('Show history',65)}<svg width="9" height="6" style="margin-left:3px"><path d="M0 0H8L4 5Z" fill="#111"/></svg></div></ui-card>
<ui-card style="height:218px"><div class="t">${T('Country Txt',66)}</div><div class="w" style="display:flex;justify-content:space-between;height:188px;padding-right:3px"><div>${[['Afghanistan',69,'#ffbe7d'],['Albania',43,'#4e79a7'],['Algeria',40,'#f1ce63'],['Andorra',46,'#a0cbe8'],['Angola',39,'#f28e2b'],['Antigua and Barb..',105,'#ffbe7d'],['Argentina',56,'#a0cbe8'],['Armenia',47,'#59a14f'],['Australia',52,'#9d7660'],['Austria',40,'#8cd17d']].map(([t,w,c])=>`<div class="c"><i style="background:${c}"></i>${T(t,w)}</div>`).join('')}</div><scroll-bar thumb="18" style="margin-bottom:-1px"></scroll-bar></div></ui-card>`);

define('sheet-tabs',`:host{display:flex;height:31px;background:#e6e6e6;border:1px solid #c8c8c8;border-width:1px 0;font:12px Roboto,sans-serif;color:#666}
div{border-right:1px solid #c8c8c8;height:29px;padding-left:5px;line-height:29px;overflow:hidden;flex:none;display:flex}.a{background:#fff;color:#333;font-weight:700;line-height:27px}.k{padding:5px 0 0 5px}`,
`<div style="width:131px;gap:5px;padding-left:9px"><svg width="10" height="12" style="margin-top:8px"><g fill="none" stroke="#666"><ellipse cx="5" cy="2.500" rx="4" ry="1.700"/><path d="M1 2.500V9Q5 12 9 9V2.500"/></g></svg>${T('Data Source',68)}</div>`+
[['attack type',61,79],['attacks countrywise',110,129],['number of sucides',101,119],['countrywise bargrph',114,131],['attacks yearwise',96,109],['regionwise',59,75],['attack type yearly',97,116],['common target',85,101],['no of tagets',65,81],['Sheet 10',48,63],['weapons types',82,98],['wound',33,39]].map(([t,w,b],i)=>`<div ${i==4?'class="a"':''} style="width:${b}px${i?'':';padding-left:6px'}">${T(t,w)}</div>`).join('')+
['M3 3H14V9M9 14H3V3M6 11V9M8.500 11V6M11 11V8','M3 3H14V9M9 14H3V3M3 8.500H14M8.500 3V14','M3 3L7 5L11 3L14 5V10M3 3V13L8 15M7 5V14'].map((d,i)=>`<div class="k" style="width:${[32,32,33][i]}px"><svg width="20" height="20"><path d="${d}" ${D}/><path d="M13.500 10V18M9.500 14H17.500" stroke="#666" stroke-width="2"/></svg></div>`).join(''));
define('status-bar',`:host{display:flex;height:20px;background:#ebebeb;font:11.500px/20px Roboto,sans-serif;color:#222;padding-left:3px}
.c{border-left:1px solid #d0d0d0;height:20px;display:flex;align-items:center;flex:none}`,
`${T('98 marks',47)}<span style="width:18px"></span>${T('1 row by 1 column',88)}<span style="width:18px"></span>${T('SUM(Attacktype1 (copy)): 51,297',168)}
<div class="c" style="width:127px;margin-left:auto"><svg width="26" height="18"><g ${D}><circle cx="11" cy="4.500" r="2.300"/><path d="M6.500 14Q6 9 11 9Q16 9 15.500 14Z"/></g></svg>${T('Nav',19)}<svg width="9" height="6" style="margin-left:66px"><path d="M0 0H8L4 5Z" fill="#111"/></svg></div>
<div class="c" style="width:27px"></div><div class="c" style="width:27px"></div><div class="c" style="width:47px"></div>
<div class="c" style="width:71px"><svg width="70" height="20" fill="#666"><path d="M8 6H9.500V13H8ZM14.500 6V13L10 9.500ZM30 6V13L25.500 9.500ZM41 6V13L45.500 9.500ZM56 6V13L60.500 9.500ZM61 6H62.500V13H61Z"/></svg></div>
<div class="c" style="width:68px"><svg width="67" height="20"><path d="M8 4h3v3H8zM12 4h3v3H12zM16 4h3v3H16zM8 8h3v3H8zM12 8h3v3H12zM16 8h3v3H16zM8 12h3v3H8zM12 12h3v3H12zM16 12h3v3H16zM29 4H40V10H29ZM29 12h3v3H29zM33 12h3v3H33zM37 12h3v3H37z" fill="#b8b8b8"/><path d="M50 4H61V15H50Z" fill="#666"/></svg></div>`);
const task=[
 '<path d="M0 2.500L6.500 1.500V7.500H0ZM7.500 1.300L16 0V7.500H7.500ZM0 8.500H6.500V14.500L0 13.500ZM7.500 8.500H16V16L7.500 14.700Z" fill="#fff" transform="translate(16 12)"/>',
 '<g fill="none" stroke="#fff" stroke-width="1.500"><circle cx="26" cy="17" r="5"/><path d="M22.500 21L16 27"/></g>',
 '<circle cx="24" cy="20" r="7" fill="none" stroke="#fff" stroke-width="2"/>',
 '<path d="M17 12V15H27V12M17 28V25H27V28M17.500 17.500H26.500V22.500H17.500ZM30.500 12V16M30.500 20V28M29 18H32" fill="none" stroke="#fff" stroke-width="1.300"/>',
 '<path d="M16 14Q27 8 37 14L38 25Q27 33 16 26Z" fill="#75401c"/><g fill="none" stroke-width="1.700"><path d="M16 14Q27 9 37 14Q27 20 16 14M16 17Q26 23 37 17" stroke="#f0b62c"/><path d="M16 20Q27 26 37 20M18 19L37 16" stroke="#ea9428"/><path d="M16 23Q27 29 38 23M16 26Q27 32 37 26M18 24L37 20" stroke="#dc5a2a"/></g>',
 '<circle cx="24" cy="20" r="12" fill="#0c59a4"/><g transform="translate(-1)"><path d="M13 19C14 6 33 4 37 18C38 25 30 26 28 22C30 14 21 13 13 19Z" fill="#4fd46b"/><path d="M13 19C14 10 24 6 31 10C25 9 21 13 20 18Z" fill="#31c0e0"/><path d="M13 19C20 11 28 15 28 20C25 17 22 20 23 25C24 29 30 31 35 27C30 34 18 34 14 26Z" fill="#1380d8"/><path d="M28 22Q25 17 23 23Q24 29 35 27Q29 28 28 22Z" fill="#1b242c"/></g>',
 '<circle cx="24" cy="20" r="12" fill="#75aadb"/><text x="18.500" y="26" font-family="Liberation Serif,serif" font-size="17" fill="#fff">R</text>',
 '<path d="M13 9H21L23 12H35V27H13Z" fill="#f3bd36"/><path d="M13 13H35V28H13Z" fill="#ffd768"/><path d="M17 20H31V30H27V25H21V30H17Z" fill="#3e98d8"/>',
 '<circle cx="24" cy="20" r="11" fill="#de4b3e"/><path d="M14.500 14.500A11 11 0 0 0 24 31L29 22H19Z" fill="#2ba24c"/><path d="M24 31A11 11 0 0 0 34 15H24L29 22Z" fill="#fdcf42"/><circle cx="24" cy="20" r="5.500" fill="#fff"/><circle cx="24" cy="20" r="4.300" fill="#4483ee"/>',
 '<path d="M12.500 9H34.500V31H12.500Z" fill="#f7f7f7"/><g transform="translate(13.500 10)">'+logo(blue)+'</g>'];
define('task-bar',`:host{display:flex;height:40px;background:linear-gradient(90deg,#1d2126,#1e262e 35%,#20262f 55%,#211f20 78%,#1d1c1c);color:#fff;font:12px/18px "Noto Sans",sans-serif}
.b{width:48px;height:40px;flex:none;position:relative}.run::after{content:"";position:absolute;left:4px;right:4px;bottom:0;height:3px;background:#76b9ed}.two::after{background:linear-gradient(90deg,#76b9ed 31px,#5a87ab 31px)}.act{background:#4c5257}.act::after{left:0;right:0}
.x{display:flex;flex-direction:column;align-items:center;padding-top:2px}`,
 task.map((s,i)=>`<div class="b ${i>4?'run':''} ${i==9?'act':i==6?'two':''}" style="margin-left:${i==5?4:i>5?1:0}px"><svg width="48" height="40">${s}</svg></div>`).join('')+
 `<svg width="110" height="40" style="margin-left:auto" fill="none" stroke="#fff" stroke-width="1.300"><circle cx="19" cy="15" r="3"/><path d="M15 23Q15 18.500 19 18.500Q23 19 23 22"/><circle cx="13.500" cy="19" r="2.500"/><path d="M9 27Q9 22 13.500 22Q18 22 18 27"/><path d="M46 22.500L51.500 17L57 22.500" stroke-width="1.500"/><path d="M68 17.500H71L75 14V26L71 22.500H68ZM77.500 17Q79.500 20 77.500 23M80 15Q83 20 80 25"/><path d="M82.500 13Q86 20 82.500 27" stroke="#777"/><path d="M94 16.500H106.500V24.500H94ZM108 18.500V22.500"/><path d="M95.500 18H100V23H95.500Z" fill="#fff" stroke="none"/></svg>
 <div class="x" style="width:40px">${T('ENG',23)}${T('US',14)}</div><div class="x" style="width:63px">${T('9:23 PM',43)}${T('07-Jan-21',52)}</div>
 <svg width="53" height="40"><path d="M12 12H28V25H19L15 29V25H12Z" fill="#fff"/><path d="M14.500 15.500H25.500M14.500 18.500H25.500M14.500 21.500H21" stroke="#222"/><circle cx="28" cy="27" r="8" fill="#35383b" stroke="#999"/><text x="24.500" y="31.500" font-family="Noto Sans,sans-serif" font-size="12" fill="#fff">1</text><path d="M49.500 0V40" stroke="#666"/></svg>`);
define('tableau-app',`:host{display:flex;flex-direction:column;width:1366px;height:768px;overflow:hidden;background:#f5f5f5}
.w{display:flex;height:593px;flex:none}.m{width:984px;margin-left:6px;display:flex;flex-direction:column;gap:6px}.v{display:flex}`,
`<title-bar></title-bar><menu-bar></menu-bar><tool-bar></tool-bar><div class="w"><data-pane></data-pane><card-column></card-column><div class="m"><shelf-row cols></shelf-row><shelf-row></shelf-row><div class="v"><viz-card></viz-card><legend-column></legend-column></div></div></div><sheet-tabs></sheet-tabs><status-bar></status-bar><task-bar></task-bar>`);
</script></body></html>
